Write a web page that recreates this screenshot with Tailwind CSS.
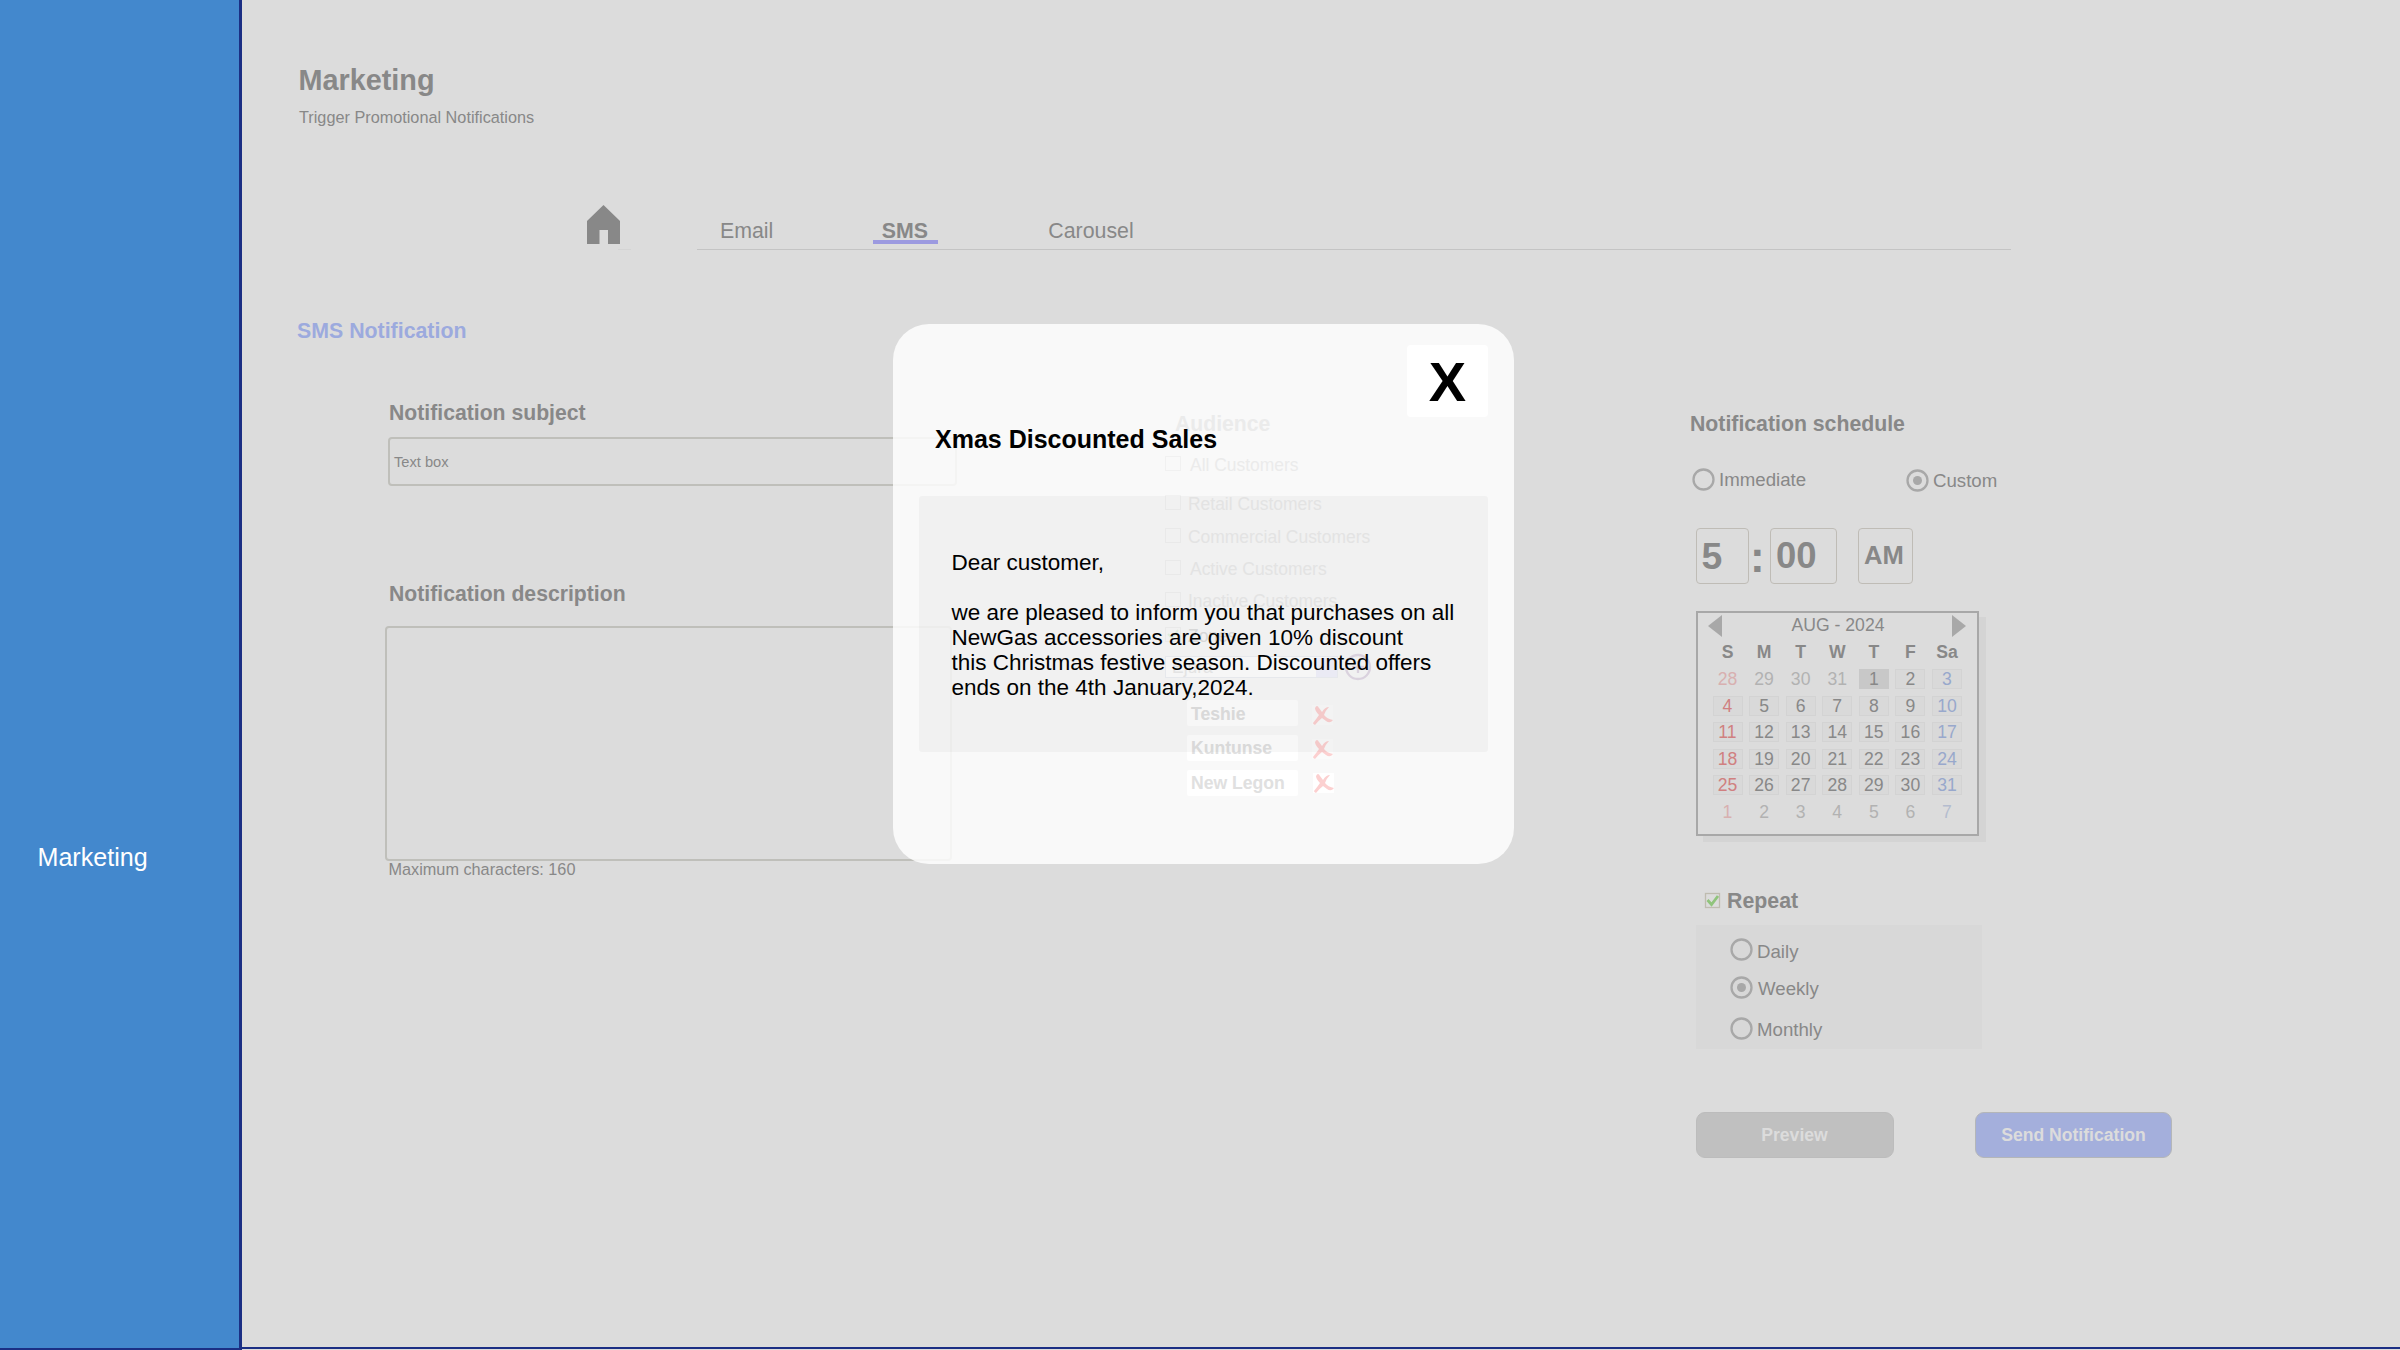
<!DOCTYPE html>
<html lang="en">
<head>
<meta charset="utf-8">
<title>Marketing</title>
<script src="https://cdn.jsdelivr.net/npm/@tailwindcss/browser@4"></script>
</head>
<body class="relative flex h-[1350px] w-[2400px] overflow-hidden bg-[#dcdcdc] font-['Liberation_Sans',Arial,sans-serif] text-[#888888]">
<aside class="h-full w-[242px] shrink-0 border-r-3 border-b-2 border-[#1b2f84] bg-[#4388cd] pt-[845px] pl-[37.500px]">
  <a class="block text-[25.1px] leading-6 text-white">Marketing</a>
</aside>
<main class="flex h-[1349px] grow flex-col border-b-2 border-[#1b2f84]">
  <h1 class="mt-[62px] ml-[56.500px] text-[28.8px] leading-9 font-bold">Marketing</h1>
  <p class="mt-[7px] ml-[57px] text-[16.25px] leading-6">Trigger Promotional Notifications</p>
  <nav class="mt-[75px] ml-[345px] flex h-[46px] items-end">
    <div class="relative mb-[6px] h-[39px] w-[33px]">
      <svg class="block" width="33" height="39" viewBox="0 0 33 39"><path fill="#888888" d="M16.5 0 33 16V39H21V25H12.500V39H0V16Z"/></svg>
      <span class="absolute top-[44px] left-[31px] h-px w-[13px] bg-[#d4d4d4]"></span>
    </div>
    <div class="ml-[77px] flex w-[1314px] items-end border-b border-[#c4c4c4] pb-[5px] text-[21.33px] leading-[18px]">
      <a class="ml-[23px] border-b-4 border-transparent">Email</a>
      <a class="ml-[100px] w-[65px] border-b-4 border-[#9c9ae0] pr-[2px] text-center font-bold">SMS</a>
      <a class="ml-[110px] border-b-4 border-transparent">Carousel</a>
    </div>
  </nav>
  <h2 class="mt-[69px] ml-[55px] text-[21.33px] leading-6 font-bold text-[#9caade]">SMS Notification</h2>

  <div class="mt-[58px] ml-[142px] flex items-start">
    <section class="w-[580px]">
      <h3 class="pl-[5px] text-[21.2px] leading-6 font-bold">Notification subject</h3>
      <div class="mt-3 ml-1 flex h-[49px] w-[569px] items-center rounded-[4px] border-2 border-[#bfbfba] pl-1 text-[14.67px]">Text box</div>
      <h3 class="mt-[96px] pl-[5px] text-[21.2px] leading-6 font-bold">Notification description</h3>
      <div class="mt-[20px] ml-px h-[235px] w-[567px] rounded-[4px] border-2 border-[#bfbfba]"></div>
      <p class="-mt-1 pl-[4.500px] text-[16.25px] leading-6">Maximum characters: 160</p>
    </section>

    <section class="mt-[11px] ml-[725px] w-[490px]">
      <h3 class="pl-px text-[21.25px] leading-6 font-bold">Notification schedule</h3>
      <div class="mt-[31px] ml-[3px] flex items-start text-[18.67px] leading-6">
        <div class="flex w-[214px]">
          <svg class="mt-px mr-[4px]" width="23" height="23" viewBox="0 0 23 23"><circle cx="11.500" cy="11.500" r="10" fill="none" stroke="#a8a8a8" stroke-width="2.300"/></svg>
          <span class="mt-px">Immediate</span>
        </div>
        <div class="mt-px flex">
          <svg class="mt-px mr-[4px]" width="23" height="23" viewBox="0 0 23 23"><circle cx="11.500" cy="11.500" r="10" fill="none" stroke="#a8a8a8" stroke-width="2.300"/><circle cx="11.500" cy="11.500" r="4.500" fill="#a8a8a8"/></svg>
          <span class="mt-px">Custom</span>
        </div>
      </div>

      <div class="mt-[35px] ml-[7px] flex h-[56px] font-bold">
        <div class="w-[53px] rounded-[4px] border-[1.5px] border-[#bfbcb6] pl-[4.500px] text-[37.33px] leading-[54px]">5</div>
        <div class="w-[21px] pl-[1px] text-[44px] leading-[58px]">:</div>
        <div class="w-[67px] rounded-[4px] border-[1.5px] border-[#bfbcb6] pl-[5px] text-[36.500px] leading-[54px]">00</div>
        <div class="ml-[21px] w-[55px] rounded-[4px] border-[1.5px] border-[#bfbcb6] pl-[5px] text-[25.6px] leading-[53px]">AM</div>
      </div>

      <div class="mt-[27px] ml-[7px] h-[225px] w-[283px] border-2 border-[#a8a8a8] bg-[#dcdcdc] text-[17.6px] shadow-[7px_6px_0_#d4d4d4]">
        <div class="flex h-[28px] items-start justify-between pt-[2px] pr-[11px] pl-[10px]">
          <svg width="14" height="22" viewBox="0 0 14 22"><path fill="#a8a8a8" d="M14 0V22L0 11Z"/></svg>
          <span class="-mt-[2px] pl-[2px] leading-6">AUG - 2024</span>
          <svg width="14" height="22" viewBox="0 0 14 22"><path fill="#a8a8a8" d="M0 0V22L14 11Z"/></svg>
        </div>
        <div id="days" class="ml-[14.500px] grid w-[249.500px] grid-cols-[repeat(7,30px)] justify-between gap-y-[6.500px] text-center leading-[20px]"></div>
      </div>

      <div class="mt-[53px] ml-[15px] flex items-start">
        <svg class="mt-[3px]" width="17" height="17" viewBox="0 0 17 17"><rect x="1.500" y="1.500" width="14" height="14" fill="none" stroke="#bfbcb0" stroke-width="1.300"/><path d="M3.500 8 7.500 12.500 14 4" fill="none" stroke="#90c47c" stroke-width="2.800"/></svg>
        <h3 class="ml-[6px] text-[21.33px] leading-6 font-bold">Repeat</h3>
      </div>
      <div class="mt-3 ml-[7px] flex h-[124px] w-[286px] flex-col bg-[#d8d8d8] pt-[13px] pl-[34px] text-[18.67px] leading-6">
        <div class="flex h-[38px]"><svg class="mr-[4px]" width="23" height="23" viewBox="0 0 23 23"><circle cx="11.500" cy="11.500" r="10" fill="none" stroke="#a8a8a8" stroke-width="2.300"/></svg><span class="mt-[2px]">Daily</span></div>
        <div class="flex h-[41px]"><svg class="mr-[5px]" width="23" height="23" viewBox="0 0 23 23"><circle cx="11.500" cy="11.500" r="10" fill="none" stroke="#a8a8a8" stroke-width="2.300"/><circle cx="11.500" cy="11.500" r="4.500" fill="#a8a8a8"/></svg><span class="mt-px">Weekly</span></div>
        <div class="flex"><svg class="mr-[4px]" width="23" height="23" viewBox="0 0 23 23"><circle cx="11.500" cy="11.500" r="10" fill="none" stroke="#a8a8a8" stroke-width="2.300"/></svg><span class="mt-px">Monthly</span></div>
      </div>

      <div class="mt-[63px] ml-[7px] flex text-[17.6px] font-bold text-[#dcdcdc]">
        <div class="h-[46px] w-[198px] rounded-[9px] border border-[#bcbcbc] bg-[#c0c0c0] pr-px text-center leading-[44px]">Preview</div>
        <div class="ml-[81px] h-[46px] w-[197px] rounded-[9px] border border-[#b4b6b8] bg-[#a4afdc] text-center leading-[44px]">Send Notification</div>
      </div>
    </section>
  </div>
</main>

<div class="absolute top-[324px] left-[893px] h-[540px] w-[621px] rounded-[36px] bg-white/83 text-black">
  <!-- audience column dimmed behind the dialog -->
  <div class="absolute top-[88px] left-[272px] w-[210px] text-[17.45px] leading-6 text-[#ebebeb]">
    <h3 class="pl-[10px] text-[21.2px] font-bold">Audience</h3>
    <div class="mt-[17px] flex h-[39px]"><i class="mt-[3px] mr-[9px] h-[15px] w-4 border border-[#f1f1f1]"></i>All Customers</div>
    <div class="flex h-[33px]"><i class="mt-[3px] mr-[7px] h-[15px] w-4 border border-[#f1f1f1]"></i>Retail Customers</div>
    <div class="flex h-[32px]"><i class="mt-[3px] mr-[7px] h-[15px] w-4 border border-[#f1f1f1]"></i>Commercial Customers</div>
    <div class="flex h-[32px]"><i class="mt-[3px] mr-[9px] h-[15px] w-4 border border-[#f1f1f1]"></i>Active Customers</div>
    <div class="flex h-[35px]"><i class="mt-[3px] mr-[7px] h-[15px] w-4 border border-[#f1f1f1]"></i>Inactive Customers</div>
    <div class="flex h-[31px] text-[#dedede]"><svg class="mt-[3px] mr-[7px]" width="16" height="15" viewBox="0 0 16 15"><rect x=".5" y=".5" width="15" height="14" fill="none" stroke="#f1f1f1"/><path d="M3 7 7 11 13 3" fill="none" stroke="#e6f4e2" stroke-width="2"/></svg>Zones</div>
    <div class="flex h-[24px] items-center">
      <div class="flex h-[22px] w-[173px] items-center justify-between border border-[#eef0f4] bg-[#fefefe] pl-[6px]"><span>Ejura</span><span class="h-[19px] w-[21px] bg-[#f2f2fc]"></span></div>
      <svg class="ml-[6px] shrink-0" width="28" height="28" viewBox="0 0 28 28"><circle cx="14" cy="14" r="12" fill="none" stroke="#e2d9e6" stroke-width="2.300"/><path d="M14 8V20M8 14H20" stroke="#e2d9e6" stroke-width="2.300"/></svg>
    </div>
    <div class="mt-[21px] ml-[22px] flex flex-col gap-[9px] text-[17.6px] font-bold text-[#e0e0e0]">
      <div class="flex items-center"><span class="h-[26px] w-[111px] rounded-[2px] bg-white pl-1 leading-[28px]">Teshie</span><svg class="mt-1 ml-[14px] bg-[#fbfbfb]" width="21" height="20" viewBox="0 0 21 20"><path fill="#fcd0d0" d="M3 3Q5-1 7 3L10 7Q13 2 17 2Q13 6 12 10Q15 14 21 15Q18 19 14 16L10 13Q6 16 3 20Q1 19 1 18Q5 13 7 10Q3 6 3 3Z"/></svg></div>
      <div class="flex items-center"><span class="h-[26px] w-[111px] rounded-[2px] bg-white pl-1 leading-[27px]">Kuntunse</span><svg class="mt-0.5 ml-[14px] bg-[#fbfbfb]" width="21" height="20" viewBox="0 0 21 20"><path fill="#fcd0d0" d="M3 3Q5-1 7 3L10 7Q13 2 17 2Q13 6 12 10Q15 14 21 15Q18 19 14 16L10 13Q6 16 3 20Q1 19 1 18Q5 13 7 10Q3 6 3 3Z"/></svg></div>
      <div class="flex items-center"><span class="h-[26px] w-[111px] rounded-[2px] bg-white pl-1 leading-[27px]">New Legon</span><svg class="ml-[15px] bg-white" width="21" height="20" viewBox="0 0 21 20"><path fill="#fcd0d0" d="M3 3Q5-1 7 3L10 7Q13 2 17 2Q13 6 12 10Q15 14 21 15Q18 19 14 16L10 13Q6 16 3 20Q1 19 1 18Q5 13 7 10Q3 6 3 3Z"/></svg></div>
    </div>
  </div>

  <div class="relative flex flex-col pt-[21px] pr-[26px] pl-[26px]">
    <button class="h-[72px] w-[81px] self-end rounded-[4px] bg-white text-[56px] leading-[73px] font-bold">X</button>
    <h2 class="mt-[10px] pl-4 text-[25px] leading-6 font-bold">Xmas Discounted Sales</h2>
    <div class="mt-[45px] h-[256px] rounded-[3px] bg-black/3 pt-[54px] pl-[32.500px] text-[22.5px] leading-[25px] whitespace-nowrap">
      <p>Dear customer,</p>
      <p class="mt-[25px]">we are pleased to inform you that purchases on all<br>NewGas accessories are given 10% discount<br>this Christmas festive season. Discounted offers<br>ends on the 4th January,2024.</p>
    </div>
  </div>
</div>

<script>
const grid = document.getElementById('days');
const add = (text, cls) => {
  const el = document.createElement('div');
  el.textContent = text;
  el.className = cls;
  grid.appendChild(el);
};
['S', 'M', 'T', 'W', 'T', 'F', 'Sa'].forEach(d => add(d, 'h-[21.500px] font-bold leading-[22px]'));
for (let i = 0; i < 42; i++) {
  const day = i < 4 ? 28 + i : i < 35 ? i - 3 : i - 34;
  const out = i < 4 || i > 34, col = i % 7;
  const color = col === 0 ? (out ? 'text-[#d8b0b0]' : 'text-[#d08080]')
    : col === 6 ? (out ? 'text-[#b4bccf]' : 'text-[#98a8cc]')
    : (out ? 'text-[#b2b2b2]' : 'text-[#888888]');
  const box = out ? 'h-[20px]' : day === 1 ? 'h-[20px] bg-[#c8c8c8]' : 'h-[20px] bg-[#d9d9d9] outline outline-[#d3d3d3] -outline-offset-1';
  add(day, color + ' ' + box);
}
</script>
</body>
</html>
